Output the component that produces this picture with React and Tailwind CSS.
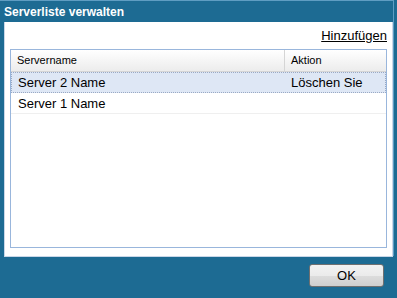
export default function App() {
  return (
    <div
      className="w-[397px] h-[298px] bg-[#1d6b93] flex flex-col overflow-hidden"
      style={{ fontFamily: '"Liberation Sans", Arial, sans-serif' }}
    >
      <div className="h-[1px] w-[393px] bg-[#5f9dc2] shrink-0" />
      <div className="flex flex-1 min-h-0">
        <div className="w-[393px] flex flex-col">
          <div className="h-[21px] pl-[4px] pt-[1px] flex items-center text-white font-bold text-[12px] leading-none">
            Serverliste verwalten
          </div>
          <div className="ml-[4px] w-[389px] h-[235px] bg-white border border-[#c9d7e8] border-t-0 flex flex-col px-[5px] pb-[8px]">
            <div className="h-[27px] flex items-center justify-end">
              <span className="text-[13px] leading-none underline text-black">Hinzufügen</span>
            </div>
            <div className="flex-1 border border-[#99b6dc] flex flex-col">
              <div className="h-[22px] flex bg-gradient-to-b from-white to-[#ececec] border-b border-[#d5d5d5] text-[11px] text-black">
                <div className="w-[274px] border-r border-[#d5d5d5] flex items-center pl-[6px]">Servername</div>
                <div className="flex-1 flex items-center pl-[6px]">Aktion</div>
              </div>
              <div className="h-[21px] flex bg-[#dee7f5] border border-dotted border-[#9aa9c4] text-[13px] text-black">
                <div className="w-[273px] flex items-center pl-[6px]">Server 2 Name</div>
                <div className="flex-1 flex items-center pl-[6px]">Löschen Sie</div>
              </div>
              <div className="h-[21px] flex border-b border-[#efefef] text-[13px] text-black pt-[2px]">
                <div className="w-[274px] flex items-center pl-[7px]">Server 1 Name</div>
                <div className="flex-1" />
              </div>
            </div>
          </div>
          <div className="flex justify-end pr-[9px] pt-[7px]">
            <button className="w-[75px] h-[23px] rounded-[3px] border border-[#707070] bg-[linear-gradient(to_bottom,#f2f2f2_0%,#ebebeb_50%,#dddddd_50%,#cfcfcf_100%)] text-[13px] text-black flex items-center justify-center leading-none">
              OK
            </button>
          </div>
        </div>
        <div className="w-[1px] bg-[#5f9dc2] self-stretch h-[256px] -mt-[1px]" />
      </div>
    </div>
  );
}
